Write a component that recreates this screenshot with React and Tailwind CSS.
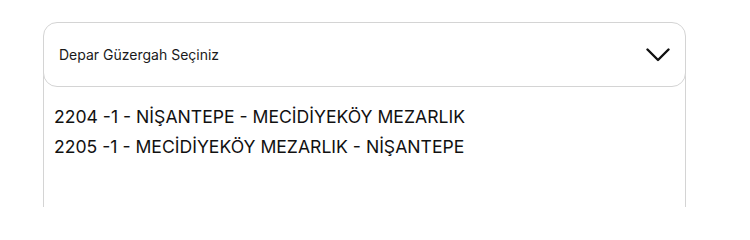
import React from "react";

const routes = [
	"2204 -1 - NİŞANTEPE - MECİDİYEKÖY MEZARLIK",
	"2205 -1 - MECİDİYEKÖY MEZARLIK - NİŞANTEPE",
];

export default function App() {
	return (
		<div className="min-h-[208px] bg-white pt-[22px] font-['Inter',sans-serif]">
			<div className="ml-[43px] w-[643px]">
				{/* Select header */}
				<div className="relative z-10 flex h-[65px] items-center justify-between rounded-[14px] border border-[#d4d4d4] bg-white pl-[15px] pr-[15px]">
					<span className="text-[14px] text-[#1a1a1a]">Depar Güzergah Seçiniz</span>
					<svg width="24" height="14" viewBox="0 0 24 14" fill="none">
						<path d="M1.5 1.5 L12 12 L22.5 1.5" stroke="#111" strokeWidth="2.4" strokeLinecap="round" strokeLinejoin="round" />
					</svg>
				</div>

				{/* Options */}
				<div className="-mt-[20px] h-[140px] border-x border-[#d4d4d4] pl-[10px] pt-[35px]">
					{routes.map((r) => (
						<div key={r} className="text-[17.6px] leading-[30px] text-[#111]">
							{r}
						</div>
					))}
				</div>
			</div>
		</div>
	);
}
